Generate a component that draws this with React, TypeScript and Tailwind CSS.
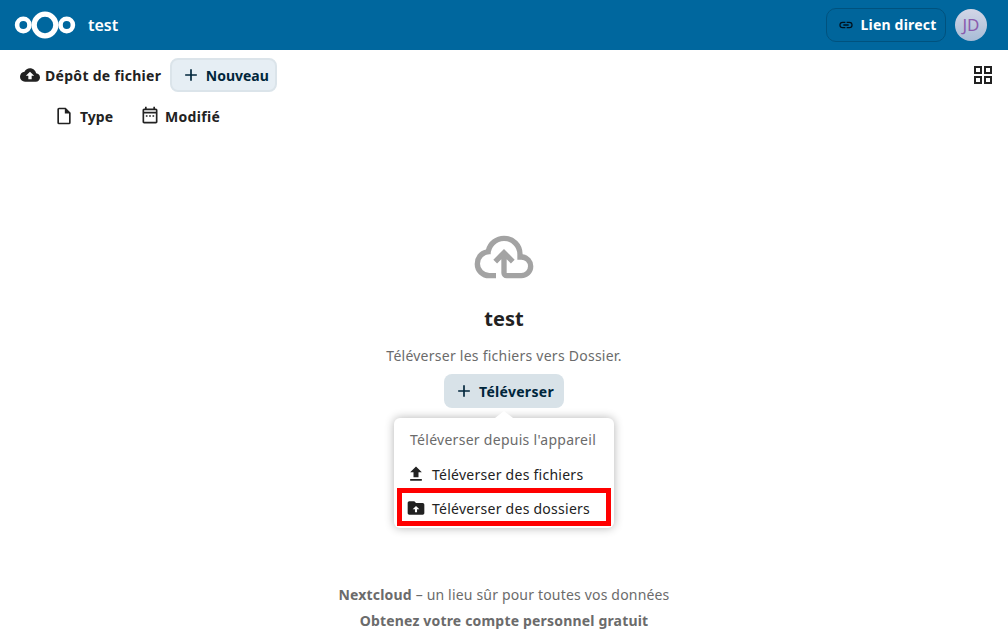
import type { ReactNode } from "react";

const mdi = {
  cloudUpload:
    "M14,13V17H10V13H7L12,8L17,13M19.35,10.03C18.67,6.59 15.64,4 12,4C9.11,4 6.6,5.64 5.35,8.03C2.34,8.36 0,10.9 0,14A6,6 0 0,0 6,20H19A5,5 0 0,0 24,15C24,12.36 21.95,10.22 19.35,10.03Z",
  cloudOutline:
    "M6.5 20Q4.22 20 2.61 18.43 1 16.85 1 14.58 1 12.63 2.17 11.1 3.35 9.57 5.25 9.15 5.88 6.85 7.75 5.43 9.63 4 12 4 14.93 4 16.96 6.04 19 8.07 19 11 20.73 11.2 21.86 12.5 23 13.78 23 15.5 23 17.38 21.69 18.69 20.38 20 18.5 20H13Q12.18 20 11.59 19.41 11 18.83 11 18V12.85L9.4 14.4L8 13L12 9L16 13L14.6 14.4L13 12.85V18H18.5Q19.55 18 20.27 17.27 21 16.55 21 15.5 21 14.45 20.27 13.73 19.55 13 18.5 13H17V11Q17 8.93 15.54 7.46 14.08 6 12 6 9.93 6 8.46 7.46 7 8.93 7 11H6.5Q5.05 11 4.03 12.03 3 13.05 3 14.5 3 15.95 4.03 17 5.05 18 6.5 18H9V20Z",
  plus: "M19,13H13V19H11V13H5V11H11V5H13V11H19V13Z",
  link: "M3.9,12C3.9,10.29 5.29,8.9 7,8.9H11V7H7A5,5 0 0,0 2,12A5,5 0 0,0 7,17H11V15.1H7C5.29,15.1 3.9,13.71 3.9,12M8,13H16V11H8V13M17,7H13V8.9H17C18.71,8.9 20.1,10.29 20.1,12C20.1,13.71 18.71,15.1 17,15.1H13V17H17A5,5 0 0,0 22,12A5,5 0 0,0 17,7Z",
  grid: "M3 11H11V3H3M5 5H9V9H5M13 21H21V13H13M15 15H19V19H15M3 21H11V13H3M5 15H9V19H5M13 3V11H21V3M19 9H15V5H19Z",
  file: "M14,2H6A2,2 0 0,0 4,4V20A2,2 0 0,0 6,22H18A2,2 0 0,0 20,20V8L14,2M18,20H6V4H13V9H18V20Z",
  calendar:
    "M7 11H9V13H7V11M11 11H13V13H11V11M15 11H17V13H15V11M21 5V19C21 20.11 20.11 21 19 21H5C3.89 21 3 20.1 3 19V5C3 3.9 3.9 3 5 3H6V1H8V3H16V1H18V3H19C20.11 3 21 3.9 21 5M5 7H19V5H5V7M19 19V9H5V19H19Z",
  upload: "M9,16V10H5L12,3L19,10H15V16H9M5,20V18H19V20H5Z",
  folderUpload:
    "M20 6C21.11 6 22 6.9 22 8V18C22 19.11 21.11 20 20 20H4C2.89 20 2 19.11 2 18V6C2 4.89 2.89 4 4 4H10L12 6H20M12 9.5L8 13.5H10.75V17H13.25V13.5H16Z",
};

function Icon({ d, size = 20, className = "" }: { d: string; size?: number; className?: string }) {
  return (
    <svg viewBox="0 0 24 24" width={size} height={size} fill="currentColor" fillRule="evenodd" className={`shrink-0 ${className}`}>
      <path d={d} />
    </svg>
  );
}

function Logo() {
  return (
    <svg width="62" height="28" viewBox="0 0 62 28" fill="none" stroke="white" className="shrink-0">
      <circle cx="9.3" cy="14" r="6.2" strokeWidth="4.6" />
      <circle cx="31" cy="14" r="10.8" strokeWidth="5.2" />
      <circle cx="52.7" cy="14" r="6.2" strokeWidth="4.6" />
    </svg>
  );
}

function MenuRow({ icon, children }: { icon: string; children: ReactNode }) {
  return (
    <div className="h-[34px] flex items-center gap-[6px] pl-[12px] text-[14px] tracking-[0.26px] text-[#222222]">
      <Icon d={icon} size={20} />
      <span>{children}</span>
    </div>
  );
}

export default function App() {
  return (
    <div className="h-[640px] w-[1008px] overflow-hidden bg-white font-['Noto_Sans',sans-serif] text-[#222222]">
      <header className="h-[50px] bg-[#00679e] flex items-center pl-[14px] pr-[21px]">
        <Logo />
        <span className="ml-[12px] text-[16px] font-semibold text-white">test</span>
        <button className="ml-auto h-[34px] w-[120px] pb-[2px] pl-[2px] rounded-[10px] border border-[#00527e] bg-[#00659b] flex items-center justify-center gap-[7px] text-[14px] tracking-[0.2px] font-bold text-white">
          <Icon d={mdi.link} size={16} className="text-[#00101c] mt-[2px]" />
          Lien direct
        </button>
        <div className="ml-[9px] w-[32px] h-[32px] rounded-full bg-gradient-to-b from-[#d3d6e6] to-[#a8bcd6] flex items-center justify-center text-[17px] text-[#8a5bad]">
          JD
        </div>
      </header>

      <div className="h-[50px] flex items-center pl-[20px] pr-[13px]">
        <Icon d={mdi.cloudUpload} size={20} className="mr-[5px]" />
        <span className="text-[14px] font-bold tracking-[0.3px]">Dépôt de fichier</span>
        <button className="ml-[9px] h-[34px] w-[107px] pl-[2px] rounded-[8px] border-2 border-[#dbe4ea] bg-[#e6eef4] flex items-center justify-center gap-[5px] text-[14px] font-bold text-[#00263b]">
          <Icon d={mdi.plus} size={20} />
          Nouveau
        </button>
        <Icon d={mdi.grid} size={24} className="ml-auto" />
      </div>

      <div className="h-[34px] -mt-[1px] flex items-center pl-[54px]">
        <Icon d={mdi.file} size={20} />
        <span className="ml-[6px] w-[60px] text-[14px] font-bold">Type</span>
        <Icon d={mdi.calendar} size={20} />
        <span className="ml-[5px] text-[14px] font-bold tracking-[0.3px]">Modifié</span>
      </div>

      <main className="flex flex-col items-center">
        <Icon d={mdi.cloudOutline} size={64} className="mt-[92px] text-[#a3a3a3]" />
        <h2 className="mt-[16px] text-[20px] leading-[28px] font-bold">test</h2>
        <p className="mt-[13px] text-[14px] leading-[20px] tracking-[0.25px] text-[#6b6b6b]">Téléverser les fichiers vers Dossier.</p>
        <div className="relative mt-[8px]">
          <button className="h-[34px] w-[120px] rounded-[8px] bg-[#d8e2e8] flex items-center justify-center gap-[5px] text-[14px] tracking-[0.3px] font-bold text-[#00263b]">
            <Icon d={mdi.plus} size={20} />
            Téléverser
          </button>
          <div className="absolute left-1/2 top-[44px] w-[220px] h-[110px] -translate-x-1/2 rounded-[6px] bg-white shadow-[0_0_10px_rgba(0,0,0,0.3)]">
            <div className="absolute left-1/2 -top-[7px] -translate-x-1/2 w-0 h-0 border-x-[9px] border-x-transparent border-b-[7px] border-b-white" />
            <div className="h-[39px] pt-[3px] flex items-center pl-[16px] text-[14px] tracking-[0.28px] text-[#6b6b6b]">Téléverser depuis l'appareil</div>
            <MenuRow icon={mdi.upload}>Téléverser des fichiers</MenuRow>
            <MenuRow icon={mdi.folderUpload}>Téléverser des dossiers</MenuRow>
            <div className="absolute left-[3px] right-[3px] top-[70px] h-[38px] border-[5px] border-[#ff0000]" />
          </div>
        </div>
        <p className="mt-[177px] text-[14px] leading-[20px] tracking-[0.18px] text-[#6b6b6b]">
          <strong className="font-bold">Nextcloud</strong> – un lieu sûr pour toutes vos données
        </p>
        <p className="mt-[6px] text-[14px] leading-[20px] tracking-[0.18px] font-bold text-[#6b6b6b]">Obtenez votre compte personnel gratuit</p>
      </main>
    </div>
  );
}
